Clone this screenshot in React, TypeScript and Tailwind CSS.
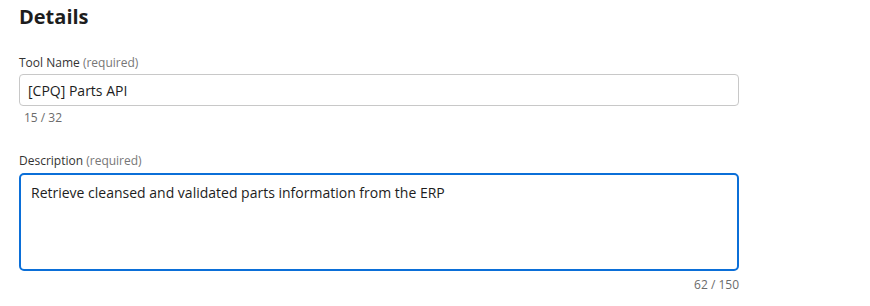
import React from 'react';

export default function App() {
  return (
    <div className="bg-white w-[870px] h-[306px] pl-[19px] pt-[3px] font-['Open_Sans',sans-serif] text-[#1d1d1d]">
      <h2 className="text-[20px] font-bold leading-[28px]">Details</h2>

      <div className="w-[720px] mt-[24px]">
        <label className="block text-[12px] leading-[16px] text-[#333]">
          Tool Name <span className="text-[#777]">(required)</span>
        </label>
        <input
          readOnly
          value="[CPQ] Parts API"
          className="mt-[3px] block w-full h-[32px] px-[8px] text-[14px] border border-[#c8c8c8] rounded-[4px] outline-none text-[#1d1d1d]"
        />
        <div className="pl-[5px] mt-[4px] text-[12px] leading-[16px] text-[#6b6b6b]">15 / 32</div>

        <label className="block mt-[27px] text-[12px] leading-[16px] text-[#333]">
          Description <span className="text-[#777]">(required)</span>
        </label>
        <textarea
          readOnly
          value="Retrieve cleansed and validated parts information from the ERP"
          className="mt-[4px] block w-full h-[98px] px-[10px] py-[8px] text-[14px] leading-[20px] border-2 border-[#0b6fd8] rounded-[5px] outline-none resize-none text-[#1d1d1d]"
        />
        <div className="mt-[6px] text-right text-[12px] leading-[16px] text-[#6b6b6b]">62 / 150</div>
      </div>
    </div>
  );
}
